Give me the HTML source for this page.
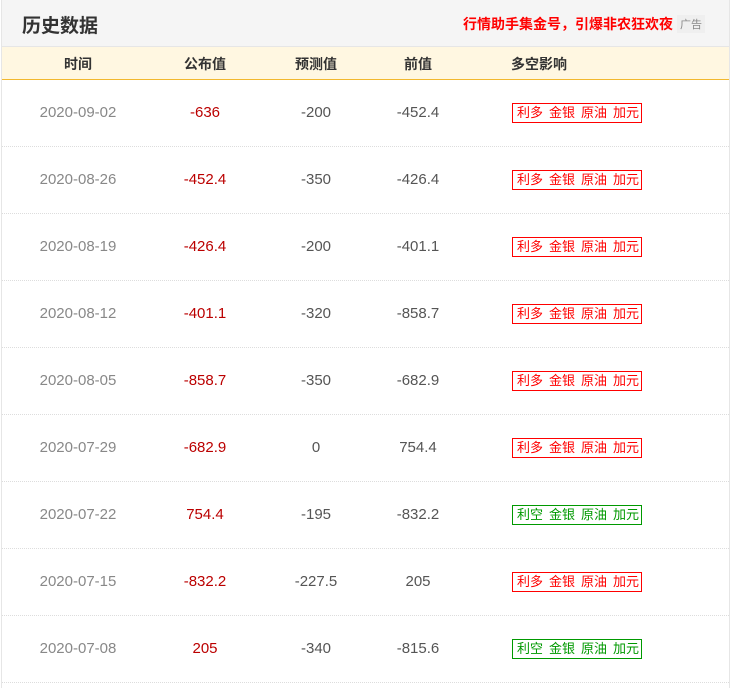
<!DOCTYPE html>
<html><head><meta charset="utf-8"><style>
*{margin:0;padding:0;box-sizing:border-box}
body{width:732px;height:688px;background:#fff;font-family:"Liberation Sans","Microsoft YaHei","Noto Sans CJK SC",sans-serif;overflow:hidden;position:relative}
.wrap{position:absolute;left:1px;top:0;width:729px;height:688px;border-left:1px solid #e6e6e6;border-right:1px solid #e6e6e6}
.hd{height:47px;background:#f5f5f5;border-bottom:1px solid #e6e6e6;position:relative}
.hd h2{position:absolute;left:20px;top:11px;font-size:19px;font-weight:bold;color:#333}
.ad{position:absolute;right:56px;top:14px;font-size:14px;font-weight:bold;color:#f00}
.adl{position:absolute;right:24px;top:15px;font-size:11px;color:#888;background:#efefef;padding:1px 3px}
.th{height:33px;background:#fff7e1;border-bottom:1px solid #f2b82e;position:relative;font-size:14px;font-weight:bold;color:#333}
.c{position:absolute;text-align:center;width:120px}
.th .c{top:7px}
.row{height:67px;border-bottom:1px dotted #ddd;position:relative;font-size:15px}
.row .c{top:24px}
.d{color:#888}.r{color:#b00}.g{color:#555}
.b{position:absolute;left:510px;top:23px;height:20px;width:130px;border:1px solid;font-size:13px;line-height:18px;padding-left:4px;white-space:nowrap;overflow:hidden}
.b span{margin-right:6px}
.br{border-color:#f00;color:#f00}.bg{border-color:#090;color:#090}
</style></head><body><div class="wrap">
<div class="hd"><h2>历史数据</h2><div class="ad">行情助手集金号，引爆非农狂欢夜</div><div class="adl">广告</div></div>
<div class="th"><div class="c" style="left:16px">时间</div><div class="c" style="left:143px">公布值</div><div class="c" style="left:254px">预测值</div><div class="c" style="left:356px">前值</div><div style="position:absolute;left:509px;top:7px">多空影响</div></div>
<div class="row"><div class="c d" style="left:16px">2020-09-02</div><div class="c r" style="left:143px">-636</div><div class="c g" style="left:254px">-200</div><div class="c g" style="left:356px">-452.4</div><div class="b br"><span>利多</span><span>金银</span><span>原油</span>加元</div></div>
<div class="row"><div class="c d" style="left:16px">2020-08-26</div><div class="c r" style="left:143px">-452.4</div><div class="c g" style="left:254px">-350</div><div class="c g" style="left:356px">-426.4</div><div class="b br"><span>利多</span><span>金银</span><span>原油</span>加元</div></div>
<div class="row"><div class="c d" style="left:16px">2020-08-19</div><div class="c r" style="left:143px">-426.4</div><div class="c g" style="left:254px">-200</div><div class="c g" style="left:356px">-401.1</div><div class="b br"><span>利多</span><span>金银</span><span>原油</span>加元</div></div>
<div class="row"><div class="c d" style="left:16px">2020-08-12</div><div class="c r" style="left:143px">-401.1</div><div class="c g" style="left:254px">-320</div><div class="c g" style="left:356px">-858.7</div><div class="b br"><span>利多</span><span>金银</span><span>原油</span>加元</div></div>
<div class="row"><div class="c d" style="left:16px">2020-08-05</div><div class="c r" style="left:143px">-858.7</div><div class="c g" style="left:254px">-350</div><div class="c g" style="left:356px">-682.9</div><div class="b br"><span>利多</span><span>金银</span><span>原油</span>加元</div></div>
<div class="row"><div class="c d" style="left:16px">2020-07-29</div><div class="c r" style="left:143px">-682.9</div><div class="c g" style="left:254px">0</div><div class="c g" style="left:356px">754.4</div><div class="b br"><span>利多</span><span>金银</span><span>原油</span>加元</div></div>
<div class="row"><div class="c d" style="left:16px">2020-07-22</div><div class="c r" style="left:143px">754.4</div><div class="c g" style="left:254px">-195</div><div class="c g" style="left:356px">-832.2</div><div class="b bg"><span>利空</span><span>金银</span><span>原油</span>加元</div></div>
<div class="row"><div class="c d" style="left:16px">2020-07-15</div><div class="c r" style="left:143px">-832.2</div><div class="c g" style="left:254px">-227.5</div><div class="c g" style="left:356px">205</div><div class="b br"><span>利多</span><span>金银</span><span>原油</span>加元</div></div>
<div class="row"><div class="c d" style="left:16px">2020-07-08</div><div class="c r" style="left:143px">205</div><div class="c g" style="left:254px">-340</div><div class="c g" style="left:356px">-815.6</div><div class="b bg"><span>利空</span><span>金银</span><span>原油</span>加元</div></div>
</div></body></html>
